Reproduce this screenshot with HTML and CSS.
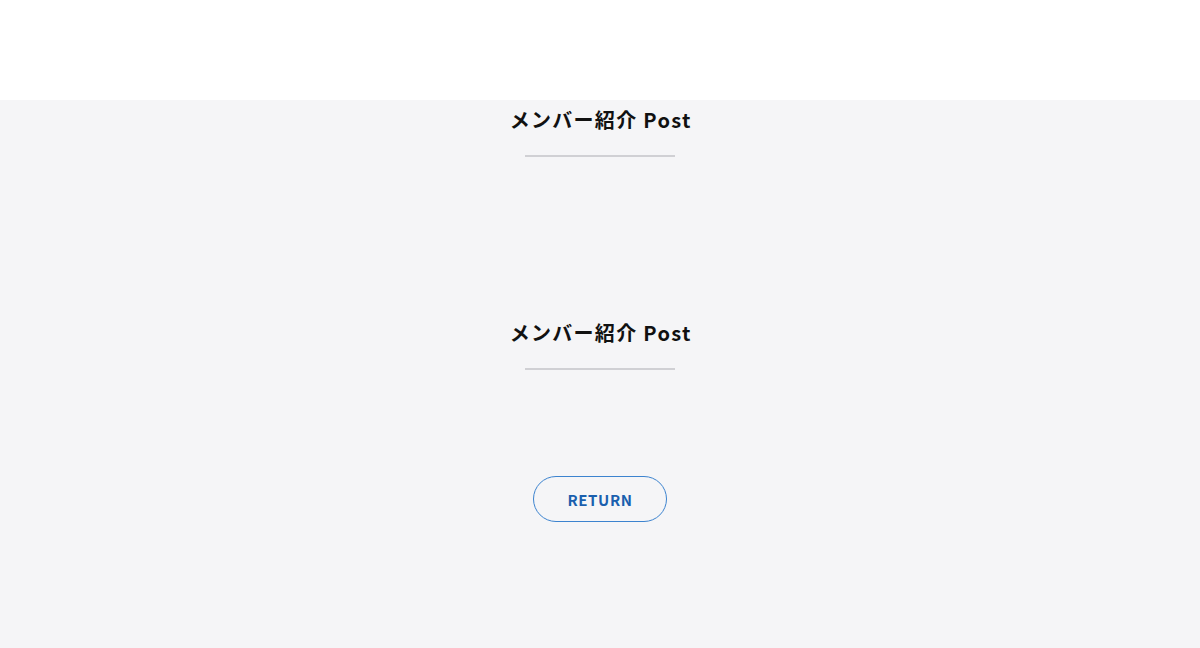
FILE: index.html
```html
<!DOCTYPE html>
<html lang="ja">
<head>
<meta charset="utf-8">
<link rel="stylesheet" href="styles.css">
</head>
<body>
<header class="site-header"></header>
<main class="main">
  <section class="block">
    <h2 class="title">メンバー紹介 Post</h2>
    <span class="rule"></span>
  </section>
  <section class="block block-second">
    <h2 class="title">メンバー紹介 Post</h2>
    <span class="rule"></span>
  </section>
  <div class="actions">
    <a class="return-btn" href="#">RETURN</a>
  </div>
</main>
</body>
</html>
```
FILE: styles.css
```css
html, body {
  margin: 0;
  padding: 0;
}
body {
  font-family: "Noto Sans CJK JP", "Noto Sans", sans-serif;
  background: #f5f5f7;
  height: 648px;
  overflow: hidden;
}
.site-header {
  height: 100px;
  background: #ffffff;
}
.main {
  background: #f5f5f7;
  display: flex;
  flex-direction: column;
  align-items: center;
}
.block {
  display: flex;
  flex-direction: column;
  align-items: center;
}
.block-second {
  margin-top: 156px;
}
.title {
  margin: 0;
  font-size: 20px;
  line-height: 40px;
  font-weight: 700;
  color: #111;
  letter-spacing: 1.3px;
  padding-left: 1.3px;
}
.rule {
  display: block;
  width: 150px;
  height: 2px;
  margin-top: 15px;
  background: #d0d0d4;
}
.actions {
  margin-top: 106px;
}
.return-btn {
  display: flex;
  align-items: center;
  justify-content: center;
  width: 132px;
  height: 44px;
  border: 1px solid #3c83cf;
  border-radius: 23px;
  color: #1a5fae;
  font-size: 15px;
  font-weight: 700;
  letter-spacing: 0.04em;
  text-decoration: none;
}
```
